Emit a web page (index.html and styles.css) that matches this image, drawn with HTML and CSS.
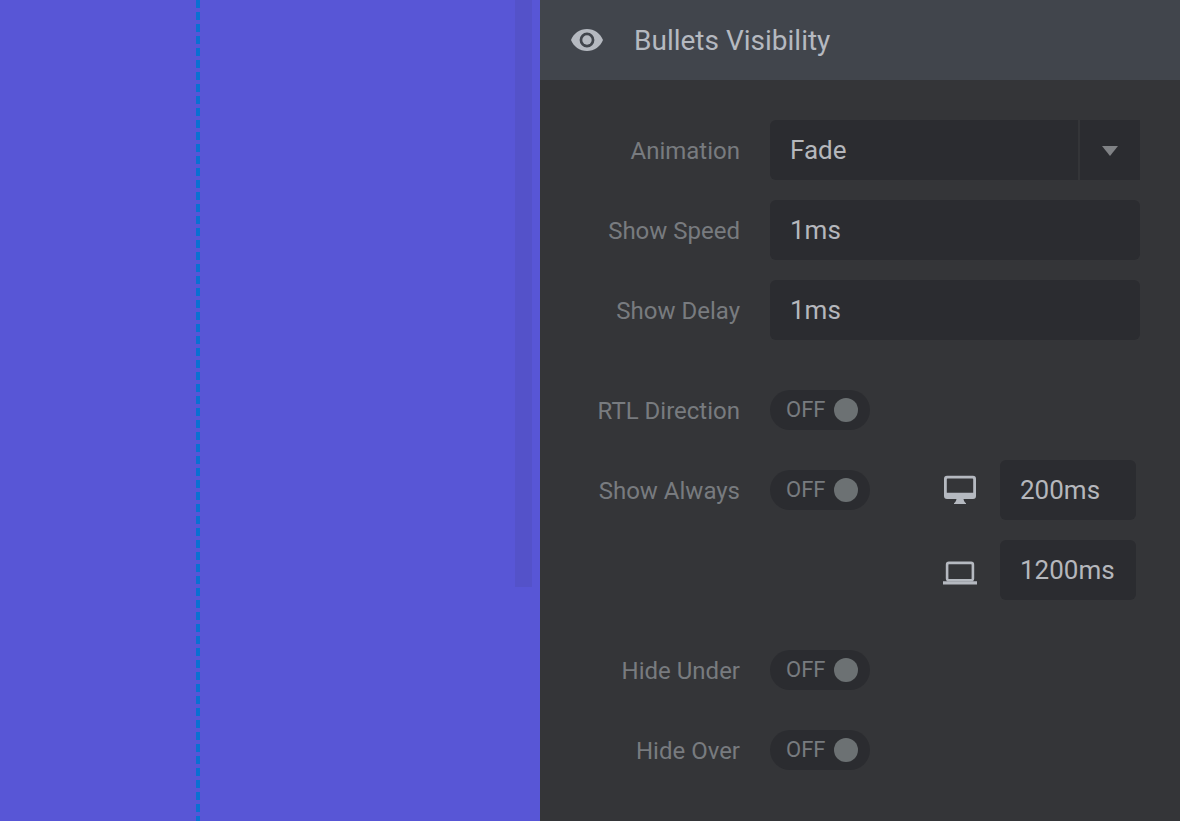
FILE: index.html
```
<!DOCTYPE html>
<html lang="en">
<head>
<meta charset="utf-8">
<meta name="viewport" content="width=device-width, initial-scale=1">
<title>Bullets Visibility</title>
<link rel="stylesheet" href="styles.css">
</head>
<body>
<div class="editor">
  <main class="stage" aria-label="Slide canvas">
    <div class="guide"></div>
    <div class="scrollbar"></div>
  </main>
  <aside class="panel">
    <header class="panel-header">
      <svg class="eye" viewBox="0 0 32 22" aria-hidden="true"><path fill="currentColor" fill-rule="evenodd" d="M16 0C8.700 0 2.500 4.600 0 11c2.500 6.400 8.700 11 16 11s13.500-4.600 16-11C29.500 4.600 23.300 0 16 0zm0 3.600a7.400 7.400 0 1 1 0 14.800a7.400 7.400 0 0 1 0-14.800z"/><circle cx="16" cy="11" r="4.700" fill="currentColor"/></svg>
      <h1 class="panel-title">Bullets Visibility</h1>
    </header>
    <form class="form">
      <div class="group">
        <div class="row">
          <label class="label" for="animation">Animation</label>
          <div class="select">
            <select class="field select-input" id="animation"><option>Fade</option></select>
            <span class="select-arrow"><svg class="caret" viewBox="0 0 16 10" aria-hidden="true"><path fill="currentColor" d="M0 0h16L8 10z"/></svg></span>
          </div>
        </div>
        <div class="row">
          <label class="label" for="speed">Show Speed</label>
          <input class="field" id="speed" type="text" value="1ms">
        </div>
        <div class="row">
          <label class="label" for="delay">Show Delay</label>
          <input class="field" id="delay" type="text" value="1ms">
        </div>
      </div>
      <div class="group">
        <div class="row">
          <label class="label" for="rtl">RTL Direction</label>
          <label class="toggle"><span class="toggle-text">OFF</span><input class="knob" id="rtl" type="checkbox" role="switch"></label>
        </div>
        <div class="row">
          <label class="label" for="always">Show Always</label>
          <div class="split">
            <label class="toggle"><span class="toggle-text">OFF</span><input class="knob" id="always" type="checkbox" role="switch"></label>
            <div class="device">
              <svg class="device-icon" viewBox="0 0 36 30" aria-hidden="true"><path fill="currentColor" fill-rule="evenodd" d="M5 .8h26a3 3 0 0 1 3 3v17.200a3 3 0 0 1-3 3H5a3 3 0 0 1-3-3V3.800a3 3 0 0 1 3-3zm.6 2.800a.8.8 0 0 0-.8.8v13.400h26.400V4.400a.8.8 0 0 0-.8-.8z"/><path fill="currentColor" d="M14.500 23h7c0 2.600.8 3.800 2.500 5.200V29H12v-.8c1.700-1.400 2.500-2.600 2.500-5.200z"/></svg>
              <input class="field device-field" type="text" value="200ms" aria-label="Desktop delay">
            </div>
          </div>
        </div>
        <div class="row">
          <div class="device device-row">
            <svg class="device-icon" viewBox="0 0 36 30" aria-hidden="true"><rect x="5.100" y="7.900" width="25.800" height="17.400" rx="1.800" fill="none" stroke="currentColor" stroke-width="2.600"/><path fill="currentColor" d="M1 26.200h34v3.200H1z"/></svg>
            <input class="field device-field" type="text" value="1200ms" aria-label="Laptop delay">
          </div>
        </div>
      </div>
      <div class="group">
        <div class="row">
          <label class="label" for="under">Hide Under</label>
          <label class="toggle"><span class="toggle-text">OFF</span><input class="knob" id="under" type="checkbox" role="switch"></label>
        </div>
        <div class="row">
          <label class="label" for="over">Hide Over</label>
          <label class="toggle"><span class="toggle-text">OFF</span><input class="knob" id="over" type="checkbox" role="switch"></label>
        </div>
      </div>
    </form>
  </aside>
</div>
</body>
</html>
```
FILE: styles.css
```
* { box-sizing: border-box; }
body {
  margin: 0;
  font-family: Roboto, "Liberation Sans", sans-serif;
  background: #343538;
}
.editor {
  display: grid;
  grid-template-columns: 27fr 32fr;
  min-height: 100vh;
}
.stage {
  display: flex;
  justify-content: space-between;
  padding: 0 8px 0 196px;
  background: #5856d6;
}
.guide {
  width: 4px;
  background: repeating-linear-gradient(to bottom, #0a70d2 0 8px, transparent 8px 12px);
}
.scrollbar {
  width: 17px;
  height: 587px;
  background: #5452c9;
}
.panel { color: #b5b9c0; }
.panel-header {
  display: flex;
  align-items: center;
  gap: 31px;
  height: 80px;
  padding: 0 31px;
  background: #41454c;
}
.eye { width: 32px; height: 22px; }
.panel-title {
  margin: 0;
  padding-top: 2px;
  font-size: 28px;
  font-weight: 400;
  line-height: 32px;
}
.form {
  display: flex;
  flex-direction: column;
  gap: 40px;
  padding: 40px 40px 40px 0;
}
.group { display: grid; gap: 20px; }
.row {
  display: grid;
  grid-template-columns: 200px 1fr;
  column-gap: 30px;
  align-items: center;
  min-height: 60px;
}
.label {
  padding-top: 2px;
  color: #787b7f;
  font-size: 24px;
  line-height: 28px;
  text-align: right;
}
.field {
  width: 100%;
  min-width: 0;
  height: 60px;
  margin: 0;
  padding: 0 20px;
  border: 0;
  border-radius: 6px;
  background: #2b2c30;
  color: #b5b7bc;
  font: inherit;
  font-size: 26px;
}
.select {
  display: grid;
  grid-template-columns: 1fr 60px;
}
.select-input {
  grid-area: 1 / 1 / 2 / 3;
  appearance: none;
  border-radius: 6px 0 0 6px;
}
.select-arrow {
  grid-area: 1 / 2;
  display: grid;
  place-items: center;
  margin-left: -2px;
  padding-top: 2px;
  border-left: 2px solid #343538;
  color: #808285;
  pointer-events: none;
}
.caret { width: 16px; height: 10px; }
.toggle {
  display: inline-flex;
  align-items: center;
  justify-content: space-between;
  justify-self: start;
  width: 100px;
  height: 40px;
  padding: 0 12px 0 16px;
  border-radius: 20px;
  background: #2b2c30;
}
.toggle-text {
  color: #787b7f;
  font-size: 22px;
  line-height: 26px;
}
.knob {
  appearance: none;
  width: 24px;
  height: 24px;
  margin: 0;
  border-radius: 50%;
  background: #6c7173;
}
.split {
  display: flex;
  align-items: center;
  justify-content: space-between;
  padding-right: 4px;
}
.device {
  display: flex;
  align-items: center;
  gap: 22px;
}
.device-row {
  grid-column: 2;
  justify-self: end;
  padding-right: 4px;
}
.device-icon {
  flex: none;
  width: 36px;
  height: 30px;
}
.device-field { width: 136px; }
```
